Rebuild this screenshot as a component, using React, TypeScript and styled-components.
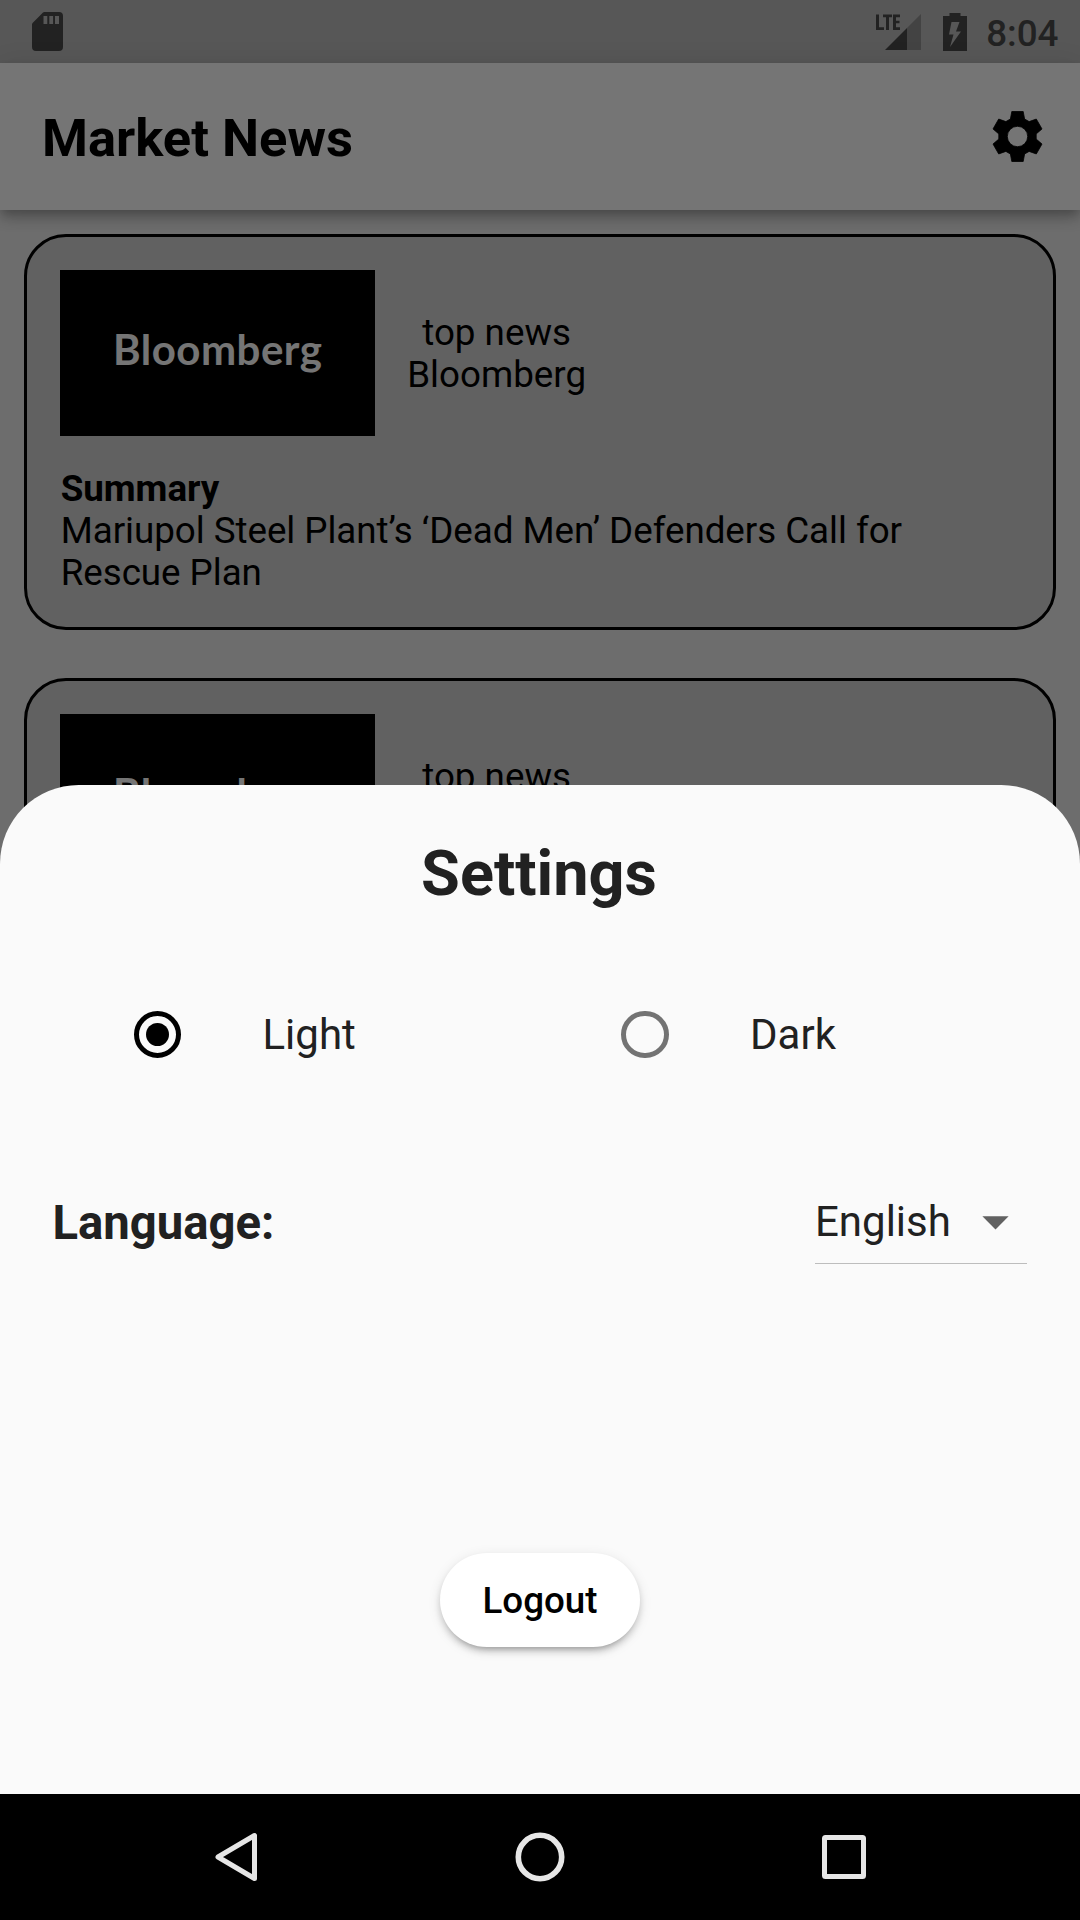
import React, { useState } from "react";
import styled, { createGlobalStyle } from "styled-components";

const GlobalStyle = createGlobalStyle`
  body {
    margin: 0;
    background: #000;
    font-family: Roboto, "Liberation Sans", sans-serif;
  }
  *, *::before, *::after {
    box-sizing: border-box;
  }
`;

const Screen = styled.div`
  position: relative;
  display: flex;
  flex-direction: column;
  width: 1080px;
  height: 1920px;
  overflow: hidden;
  background: #eee;
`;

const StatusBar = styled.header`
  display: flex;
  flex: none;
  align-items: center;
  justify-content: space-between;
  height: 63px;
  padding: 0 21.5px 0 32px;
  background: #bdbdbd;
  color: #4a4a4a;
`;

const StatusGroup = styled.div`
  display: flex;
  align-items: center;
`;

const Glyph = styled.svg<{ $gap?: number }>`
  display: block;
  flex: none;
  margin-right: ${(p) => p.$gap ?? 0}px;
`;

const Clock = styled.span`
  font-size: 36.75px;
  font-weight: 500;
  line-height: 43px;
  padding-top: 4px;
`;

const AppBar = styled.div`
  display: flex;
  flex: none;
  align-items: center;
  justify-content: space-between;
  height: 147px;
  padding: 0 31.5px 0 42px;
  background: #fff;
  z-index: 1;
  box-shadow:
    0 5px 10px -2px rgba(0, 0, 0, 0.22),
    0 10px 13px 0 rgba(0, 0, 0, 0.12),
    0 3px 26px 0 rgba(0, 0, 0, 0.1);
`;

const AppTitle = styled.h1`
  margin: 0;
  padding-top: 2px;
  font-size: 52.5px;
  font-weight: 700;
  line-height: 62px;
`;

const IconButton = styled.button`
  display: flex;
  padding: 0;
  border: 0;
  background: none;
  color: #000;
`;

const NewsList = styled.main`
  display: flex;
  flex: 1;
  flex-direction: column;
  gap: 48px;
  min-height: 0;
  overflow: hidden;
  padding: 23.6px;
`;

const Card = styled.article`
  display: flex;
  flex: none;
  flex-direction: column;
  gap: 31.5px;
  height: 396px;
  padding: 33.6px;
  border: 3px solid #000;
  border-radius: 42px;
  background: #d3d3d3;
`;

const CardHead = styled.div`
  display: flex;
  align-items: center;
  gap: 32px;
`;

const Logo = styled.div`
  display: flex;
  justify-content: center;
  width: 315px;
  height: 166px;
  padding-top: 54px;
  background: #000;
  color: #fff;
  font-family: Lato, sans-serif;
  font-size: 42px;
  font-weight: 700;
  line-height: 50px;
  letter-spacing: 0.5px;
`;

const Source = styled.div`
  display: flex;
  flex-direction: column;
  align-items: center;
  padding-top: 1px;
  font-size: 36.75px;
  line-height: 42px;
`;

const Summary = styled.p<{ $strong?: boolean }>`
  margin: 0;
  padding-left: 0.5px;
  font-size: 36.75px;
  font-weight: ${(p) => (p.$strong ? 700 : 400)};
  line-height: 42px;
  letter-spacing: -0.04px;
`;

const Scrim = styled.div`
  position: absolute;
  inset: 0;
  z-index: 2;
  display: flex;
  flex-direction: column;
  justify-content: flex-end;
  background: rgba(0, 0, 0, 0.54);
`;

const Sheet = styled.section`
  display: flex;
  flex-direction: column;
  height: 1009px;
  padding: 51.5px 52.5px 0;
  border-radius: 78.75px 78.75px 0 0;
  background: #fafafa;
  color: #212121;
`;

const SheetTitle = styled.h2`
  margin: 0 0 61px;
  padding-right: 2px;
  font-size: 63px;
  font-weight: 700;
  line-height: 74px;
  text-align: center;
`;

const ThemeOptions = styled.div`
  display: grid;
  grid-template-columns: 1fr 1fr;
`;

const ThemeOption = styled.div`
  display: flex;
  align-items: center;
  gap: 42px;
  height: 126px;
  padding: 0 42px;
  font-size: 42px;
`;

const RadioSlot = styled.span`
  display: grid;
  place-items: center;
  width: 126px;
  height: 126px;
`;

const Radio = styled.span<{ $on: boolean }>`
  display: grid;
  place-items: center;
  width: 47.25px;
  height: 47.25px;
  border: 5.25px solid ${(p) => (p.$on ? "#000" : "#737373")};
  border-radius: 50%;

  &::after {
    content: "";
    width: 23.6px;
    height: 23.6px;
    border-radius: 50%;
    background: ${(p) => (p.$on ? "#000" : "transparent")};
  }
`;

const LanguageRow = styled.div`
  display: flex;
  align-items: center;
  justify-content: space-between;
  height: 84px;
  margin-top: 82.5px;
  padding-right: 1px;
`;

const LanguageLabel = styled.span`
  padding-top: 2px;
  font-size: 47.25px;
  font-weight: 700;
  line-height: 56px;
`;

const Dropdown = styled.div`
  display: flex;
  align-items: center;
  justify-content: space-between;
  width: 211.5px;
  height: 84px;
  padding-bottom: 1px;
  border-bottom: 1px solid #bdbdbd;
  font-size: 42px;
  line-height: 49px;
`;

const LogoutButton = styled.button`
  align-self: center;
  width: 200px;
  height: 94.5px;
  margin-top: 288.5px;
  padding: 2px 0 0;
  border: 0;
  border-radius: 48px;
  background: #fff;
  color: #000;
  font-family: inherit;
  font-size: 36.75px;
  font-weight: 500;
  box-shadow:
    0 7px 4px -5px rgba(0, 0, 0, 0.18),
    0 5px 6px 0 rgba(0, 0, 0, 0.14),
    0 3px 13px 0 rgba(0, 0, 0, 0.1);
`;

const NavBar = styled.nav`
  display: flex;
  flex: none;
  align-items: center;
  justify-content: space-between;
  height: 126px;
  padding: 0 214px 0 215px;
  background: #000;
`;

function SdCardIcon() {
  return (
    <Glyph width="31" height="39" viewBox="0 0 31 39" fill="currentColor">
      <path
        fillRule="evenodd"
        d="M12.5 0H27a4 4 0 0 1 4 4v31a4 4 0 0 1-4 4H4a4 4 0 0 1-4-4V12.5a2 2 0 0 1 .6-1.4L11 .6a2 2 0 0 1 1.500-.6zM11.500 4v8h3.800V4zM17.300 4v8h3.800V4zM23 4v8h4V4z"
      />
    </Glyph>
  );
}

function SignalIcon() {
  return (
    <Glyph $gap={22} width="45" height="38" viewBox="0 0 45 38" fill="currentColor">
      <path d="M45 1v36H31V15z" opacity="0.37" />
      <path d="M31 15v22H9z" />
      <path d="M0 1.500h3v12.800h5V17H0zM7 1.500h9v2.700h-3V17h-3V4.200H7zM17 1.500h7v2.700h-4v3.500h3.500v2.600H20v4h4V17h-7z" />
    </Glyph>
  );
}

function BatteryIcon() {
  return (
    <Glyph $gap={19} width="24" height="38" viewBox="0 0 24 38" fill="currentColor">
      <path fillRule="evenodd" d="M6.500 0h11v3H24v35H0V3h6.500zM8.500 9L6 21.500h4.500L7 34l11-15.500h-5L16.500 9z" />
    </Glyph>
  );
}

// One gear tooth, repeated every 60 degrees to form the outline.
const TOOTH = [
  [-7.1, -17.5],
  [-5.7, -25],
  [5.7, -25],
  [7.1, -17.5],
];

const GEAR_PATH =
  "M" +
  [0, 60, 120, 180, 240, 300]
    .flatMap((deg) => {
      const a = (deg * Math.PI) / 180;
      return TOOTH.map(
        ([x, y]) =>
          `${(x * Math.cos(a) - y * Math.sin(a)).toFixed(2)} ${(x * Math.sin(a) + y * Math.cos(a)).toFixed(2)}`
      );
    })
    .join("L") +
  "ZM-10.200 0a10.200 10.200 0 1 0 20.400 0a10.200 10.200 0 1 0-20.400 0Z";

function GearIcon() {
  return (
    <Glyph width="63" height="63" viewBox="-31.500 -31.500 63 63" fill="currentColor" stroke="currentColor" strokeWidth="0.800" strokeLinejoin="round">
      <path fillRule="evenodd" d={GEAR_PATH} />
    </Glyph>
  );
}

function NewsCard() {
  return (
    <Card>
      <CardHead>
        <Logo>Bloomberg</Logo>
        <Source>
          <span>top news</span>
          <span>Bloomberg</span>
        </Source>
      </CardHead>
      <div>
        <Summary $strong>Summary</Summary>
        <Summary>Mariupol Steel Plant’s ‘Dead Men’ Defenders Call for Rescue Plan</Summary>
      </div>
    </Card>
  );
}

export default function App() {
  const [theme, setTheme] = useState("Light");

  return (
    <>
      <GlobalStyle />
      <Screen>
        <StatusBar>
          <SdCardIcon />
          <StatusGroup>
            <SignalIcon />
            <BatteryIcon />
            <Clock>8:04</Clock>
          </StatusGroup>
        </StatusBar>
        <AppBar>
          <AppTitle>Market News</AppTitle>
          <IconButton>
            <GearIcon />
          </IconButton>
        </AppBar>
        <NewsList>
          <NewsCard />
          <NewsCard />
        </NewsList>
        <Scrim>
          <Sheet>
            <SheetTitle>Settings</SheetTitle>
            <ThemeOptions role="radiogroup">
              {["Light", "Dark"].map((name) => (
                <ThemeOption key={name} role="radio" aria-checked={theme === name} onClick={() => setTheme(name)}>
                  <RadioSlot>
                    <Radio $on={theme === name} />
                  </RadioSlot>
                  <span>{name}</span>
                </ThemeOption>
              ))}
            </ThemeOptions>
            <LanguageRow>
              <LanguageLabel>Language:</LanguageLabel>
              <Dropdown>
                English
                <Glyph width="63" height="63" viewBox="0 0 24 24" fill="#616161">
                  <path d="M7 10l5 5 5-5z" />
                </Glyph>
              </Dropdown>
            </LanguageRow>
            <LogoutButton>Logout</LogoutButton>
          </Sheet>
          <NavBar>
            <Glyph width="43" height="50" viewBox="0 0 43 50" fill="none" stroke="#e6e6e6" strokeWidth="5" strokeLinejoin="round">
              <path d="M39.500 3.500v43L3 25z" />
            </Glyph>
            <Glyph width="50" height="50" viewBox="0 0 50 50" fill="none" stroke="#e6e6e6" strokeWidth="5.600">
              <circle cx="25" cy="25" r="21.700" />
            </Glyph>
            <Glyph width="44" height="44" viewBox="0 0 44 44" fill="none" stroke="#e6e6e6" strokeWidth="5" strokeLinejoin="round">
              <rect x="2.500" y="2.500" width="39" height="39" rx="1" />
            </Glyph>
          </NavBar>
        </Scrim>
      </Screen>
    </>
  );
}
